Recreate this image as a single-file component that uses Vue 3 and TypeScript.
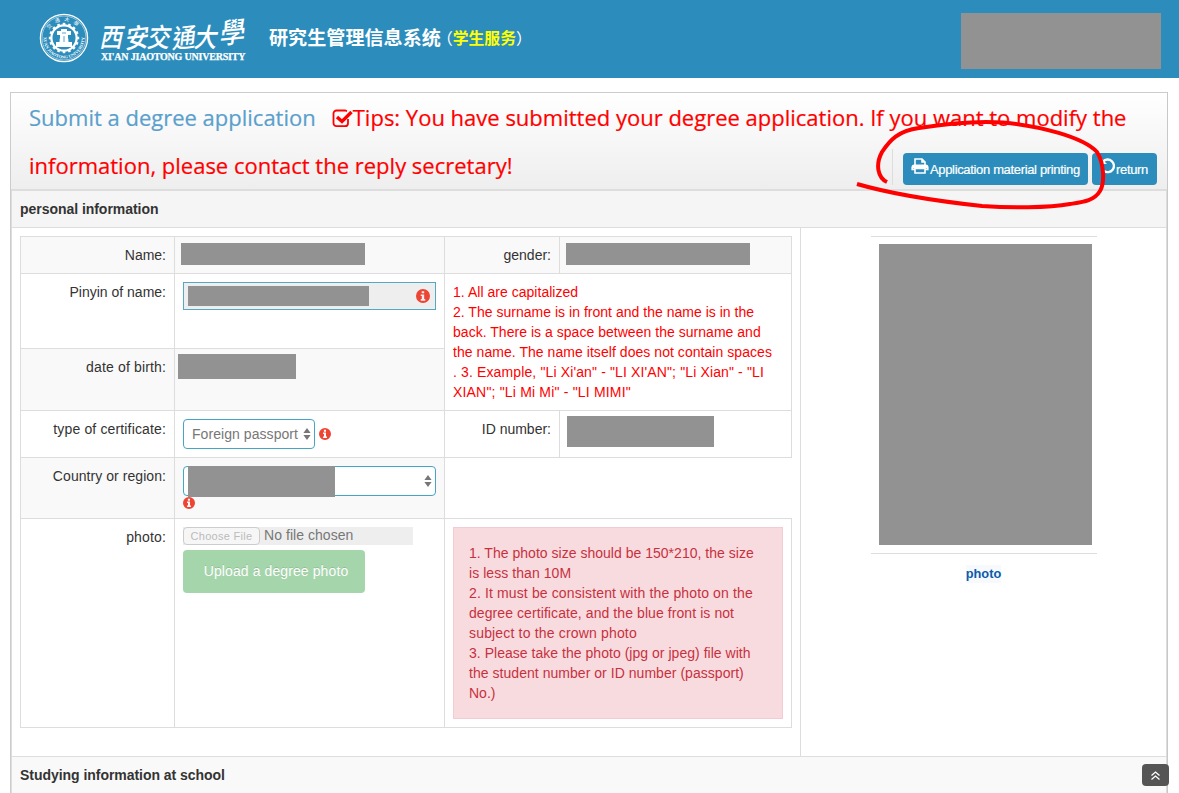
<script setup lang="ts">
interface Line { text: string; gap: number }
const nameHints: Line[] = [
  { text: '1. All are capitalized', gap: 0.03 },
  { text: '2. The surname is in front and the name is in the', gap: 0.02 },
  { text: 'back. There is a space between the surname and', gap: 0.03 },
  { text: 'the name. The name itself does not contain spaces', gap: 0.05 },
  { text: '. 3. Example, "Li Xi\'an" - "LI XI\'AN"; "Li Xian" - "LI', gap: 0.13 },
  { text: 'XIAN"; "Li Mi Mi" - "LI MIMI"', gap: 0.18 },
]
const photoHints: Line[] = [
  { text: '1. The photo size should be 150*210, the size', gap: 0.02 },
  { text: 'is less than 10M', gap: 0.06 },
  { text: '2. It must be consistent with the photo on the', gap: 0.13 },
  { text: 'degree certificate, and the blue front is not', gap: 0.08 },
  { text: 'subject to the crown photo', gap: 0.17 },
  { text: '3. Please take the photo (jpg or jpeg) file with', gap: 0.03 },
  { text: 'the student number or ID number (passport)', gap: 0.04 },
  { text: 'No.)', gap: 0 },
]
const teeth: number[] = Array.from({ length: 16 }, (_, i) => i * 22.5)
const infoPath = 'M6.5 0a6.5 6.5 0 1 0 0 13a6.5 6.5 0 0 0 0-13zM5.3 2h2.3v2H5.3zM4.4 5h3.2v4.3h1v1.6H4.4V9.3h1V6.5h-1z'
</script>

<template>
  <div class="page">
    <header class="topbar">
      <svg class="seal" width="50" height="50" viewBox="0 0 50 50">
        <defs>
          <path id="seal-arc" d="M4.5 25a20.500 20.500 0 0 0 41 0" />
          <path id="seal-top" d="M8 25a17 17 0 0 1 34 0" />
        </defs>
        <circle cx="25" cy="25" r="23.6" fill="none" stroke="#fff" stroke-width="1.3" />
        <circle cx="25" cy="25" r="22" fill="none" stroke="#fff" stroke-width=".5" />
        <text class="seal-en" fill="#fff"><textPath href="#seal-arc" startOffset="50%" text-anchor="middle">XI'AN JIAOTONG UNIVERSITY</textPath></text>
        <text class="seal-cn" fill="#fff"><textPath href="#seal-top" startOffset="50%" text-anchor="middle">交通大學</textPath></text>
        <circle cx="25" cy="25" r="12.600" fill="none" stroke="#fff" stroke-width="2.200" />
        <rect v-for="a in teeth" :key="a" x="23.700" y="9.800" width="2.600" height="3.200" fill="#fff" :transform="`rotate(${a} 25 25)`" />
        <path d="M18 18h4v-2h6v2h4v4h-3v3l1 4h3v5H17v-5h3l1-4v-3h-3z" fill="#fff" />
        <path d="M16 28h5M29 28h5M23 20h4M25 23v6" stroke="#2c8dbc" stroke-width=".8" />
      </svg>
      <div class="wordmark">
        <div class="wordmark-cn"><span>西</span><span>安</span><span>交</span><span>通</span><span>大</span><span>學</span></div>
        <div class="wordmark-en">XI'AN JIAOTONG UNIVERSITY</div>
      </div>
      <div class="system"><b>研究生管理信息系统</b><span class="sub"><i>（</i><em>学生服务</em><i>）</i></span></div>
      <div class="block user"></div>
    </header>

    <main class="box">
      <div class="box-head">
        <h1><span class="title">Submit a degree application</span><svg class="check" width="21" height="20" viewBox="0 0 21 20"><path d="M16 11v4.200a3 3 0 0 1-3 3H4.500a3 3 0 0 1-3-3V5.500a3 3 0 0 1 3-3H13l2 .6" fill="none" stroke="red" stroke-width="1.800" /><path d="M5 9l5 4.500L19.500 4" fill="none" stroke="red" stroke-width="3.400" /></svg><span>Tips: You have submitted your degree application. If you want to modify the</span><br><span>information, please contact the reply secretary!</span></h1>
        <div class="actions">
          <button class="print"><svg width="18" height="16" viewBox="0 0 18 16"><path d="M4 7V1h7l3 3v3M11 1v3h3M3.500 11.500H1.200V9A2 2 0 0 1 3 7.200h12A2 2 0 0 1 16.800 9v2.500h-2.300M4 10.500h10V15H4z" fill="none" stroke="#fff" stroke-width="1.600" /><path d="M1.500 7.500h15v3h-15z" fill="#fff" /></svg><span>Application material printing</span></button>
          <button class="return"><svg width="15" height="16" viewBox="0 0 15 16"><path d="M3 3.600A6.300 6.300 0 1 1 4 13" fill="none" stroke="#fff" stroke-width="2.400" /><path d="M1 0v6h6z" fill="#fff" /></svg><span>return</span></button>
        </div>
      </div>
      <div class="box-body">
        <div class="section first"><b>personal information</b></div>
        <div class="columns">
          <div class="left">
            <div class="grid">
              <div class="cell label gray"><span>Name:</span></div>
              <div class="cell gray"><div class="block name"></div></div>
              <div class="cell label gray"><span>gender:</span></div>
              <div class="cell gray"><div class="block name"></div></div>

              <div class="cell label"><span>Pinyin of name:</span></div>
              <div class="cell"><div class="input"><div class="block pinyin"></div><svg width="14" height="14" viewBox="0 0 13 13"><path :d="infoPath" fill="#ee4433" fill-rule="evenodd" /></svg></div></div>
              <div class="cell hints"><div v-for="(h, i) in nameHints" :key="i" :style="{ letterSpacing: h.gap + 'px' }">{{ h.text }}</div></div>

              <div class="cell label gray airy"><span>date of birth:</span></div>
              <div class="cell gray"><div class="block birth"></div></div>

              <div class="cell label airy"><span>type of certificate:</span></div>
              <div class="cell cert"><div class="select"><span>Foreign passport</span><svg width="8" height="12" viewBox="0 0 8 12"><path d="M4 0l3.600 5H.4zM4 12l3.600-5H.4z" fill="#777" /></svg></div><svg width="12" height="12" viewBox="0 0 13 13"><path :d="infoPath" fill="#ee4433" fill-rule="evenodd" /></svg></div>
              <div class="cell label"><span>ID number:</span></div>
              <div class="cell"><div class="block idno"></div></div>

              <div class="cell label gray country-label"><span>Country or region:</span></div>
              <div class="cell gray"><div class="select wide"><div class="block country"></div><svg width="8" height="12" viewBox="0 0 8 12"><path d="M4 0l3.600 5H.4zM4 12l3.600-5H.4z" fill="#777" /></svg></div><svg class="below" width="12" height="12" viewBox="0 0 13 13"><path :d="infoPath" fill="#ee4433" fill-rule="evenodd" /></svg></div>
              <div class="empty"></div>

              <div class="cell label airy"><span>photo:</span></div>
              <div class="cell upload"><div class="file"><span class="choose">Choose File</span><span class="nofile">No file chosen</span></div><button class="green"><span>Upload a degree photo</span></button></div>
              <div class="cell alertcell"><div class="alert"><div v-for="(h, i) in photoHints" :key="i" :style="{ letterSpacing: h.gap + 'px' }">{{ h.text }}</div></div></div>
            </div>
          </div>
          <div class="right">
            <div class="frame"><div class="block portrait"></div></div>
            <b class="caption">photo</b>
          </div>
        </div>
        <div class="section second"><b>Studying information at school</b></div>
      </div>
    </main>

    <svg class="ink" width="260" height="100" viewBox="850 115 260 100"><path d="M887 182C878 178 875 165 882 152C890 140 898 131 919 128C950 123 980 121 1003 122.500C1040 126 1083 137 1097 152C1104 163 1105 183 1100 191C1094 201 1083 202 1070 204C1048 208 1010 208 982 206C945 202 895 195 857 184" fill="none" stroke="red" stroke-width="4" /></svg>
    <div class="totop"><svg width="11" height="11" viewBox="0 0 11 11"><path d="M1.500 5.500l4-3.500 4 3.500M1.500 9.500l4-3.500 4 3.500" fill="none" stroke="#fff" stroke-width="1.300" /></svg></div>
  </div>
</template>

<style>
html, body { overflow: hidden; }
</style>
<style scoped>
* { box-sizing: border-box; }
svg { flex: none; }
.page { position: relative; width: 1179px; height: 793px; overflow: hidden; background: #fff; color: #333; font: 14px/20px "Liberation Sans", Arial, sans-serif; }
.block { background: #929292; flex: none; }
.topbar { display: flex; height: 78px; background: #2c8dbc; color: #fff; padding: 13px 18px 0 39px; }
.seal-en { font: bold 4.4px "Liberation Serif", serif; }
.seal-cn { font: 5px "Noto Sans CJK SC", sans-serif; letter-spacing: 4px; }
.wordmark { width: 146px; margin-left: 11px; }
.wordmark-cn { height: 37px; display: flex; justify-content: space-between; transform: skewX(-12deg); font: 500 23px/50px "Noto Sans CJK TC", sans-serif; margin: -3px 0 0 3px; }
.wordmark-cn span:nth-child(2n) { transform: rotate(-6deg) scaleY(1.15); }
.wordmark-cn span:nth-child(2n + 1) { transform: scaleY(1.15); }
.wordmark-cn span:last-child { font-size: 25px; line-height: 41px; }
.wordmark-en { font: bold 10px/12px "Liberation Serif", serif; letter-spacing: -.2px; white-space: nowrap; margin: 4px 0 0 1px; -webkit-text-stroke: .25px #fff; }
.system { margin-left: 23px; font-family: "Noto Sans CJK SC", sans-serif; white-space: nowrap; display: flex; height: 48px; line-height: 48px; width: 300px; }
.system b { font-size: 19.100px; font-weight: 700; }
.sub { font-size: 15.800px; line-height: 50px; margin-left: 4px; }
.sub i { font-style: normal; font-feature-settings: "halt"; }
.sub em { font-style: normal; font-weight: 700; color: #ff0; }
.user { width: 200px; height: 56px; margin-left: auto; }
.box { margin: 14px 11px 0 10px; width: 1158px; height: 720px; border: 1px solid #ccc; border-right-color: #c8c8c8; }
.box-head { height: 98px; border-bottom: 2px solid #ddd; background: linear-gradient(#fff, #eee); position: relative; }
h1 { margin: 0; padding: 0 0 0 18px; font: 22px/48px "Open Sans", sans-serif; color: red; white-space: nowrap; -webkit-text-stroke: .2px currentColor; }
.title { color: #5aa0cc; }
.check { margin: 0 0 0 16px; vertical-align: -2px; }
.actions { position: absolute; right: 10px; top: 56px; height: 36px; padding: 4px 0 0 10px; border-left: 1px solid #ddd; display: flex; gap: 4px; }
.actions button { border: 0; border-radius: 4px; background: #2c8dbc; color: #fff; height: 32px; font: 13px/20px "Liberation Sans", sans-serif; display: flex; white-space: nowrap; padding: 5px 8px 0; }
.actions span { line-height: 24px; margin-left: 1px; letter-spacing: -.34px; -webkit-text-stroke: .2px #fff; }
.print { width: 185px; }
.return { width: 65px; }
.box-body { border: 1px solid #ddd; border-top: 0; height: 620px; }
.section { height: 37px; background: #f5f5f5; line-height: 36px; padding-left: 8px; border-bottom: 1px solid #ddd; letter-spacing: -.04px; }
.second { border: 0; border-top: 1px solid #ddd; background: #f9f9f9; height: 38px; line-height: 37px; }
.columns { display: flex; height: 528px; }
.left { width: 789px; border-right: 1px solid #ddd; padding: 8px; }
.grid { display: grid; grid-template-columns: 154px 270px 115px 232px; grid-template-rows: 37px 75px 62px 47px 61px 209px; }
.cell { border: 1px solid #ddd; margin: 0 -1px -1px 0; padding: 8px; min-width: 0; }
.gray { background: #f9f9f9; }
.label { text-align: right; white-space: nowrap; }
.airy { letter-spacing: .15px; }
.country-label { letter-spacing: .06px; }
.name { width: 184px; height: 22px; margin: -2px 0 0 -2px; }
.input { height: 28px; border: 1px solid #55a8c0; background: #eee; padding: 3px 5px 0 4px; display: flex; justify-content: space-between; }
.pinyin { width: 181px; height: 20px; }
.input svg { margin-top: 3px; }
.hints { grid-column: 3 / 5; grid-row: 2 / 4; color: red; white-space: nowrap; }
.birth { width: 118px; height: 25px; margin: -3px 0 0 -5px; }
.cert { display: flex; }
.select { width: 132px; height: 30px; border: 1px solid #45a5c4; border-radius: 4px; background: #fff; padding: 0 3px 0 8px; line-height: 28px; color: #777; display: flex; justify-content: space-between; white-space: nowrap; letter-spacing: .06px; }
.select svg { margin-top: 8px; }
.cert > svg { margin: 9px 0 0 4px; }
.idno { width: 147px; height: 31px; margin: -3px 0 0 -1px; }
.wide { width: 253px; padding: 0 3px 0 4px; }
.country { width: 147px; height: 31px; margin-top: -1px; }
.below { display: block; margin-top: 1px; }
.empty { grid-column: 3 / 5; }
.file { width: 230px; height: 18px; background: #eee; display: flex; line-height: 17px; color: #777; }
.choose { width: 77px; border: 1px solid #ccc; border-radius: 4px; background: #f6f6f6; color: #bbb; font-size: 11px; line-height: 17px; text-align: center; letter-spacing: .3px; white-space: nowrap; }
.nofile { margin-left: 4px; letter-spacing: .05px; }
.green { width: 182px; height: 43px; margin: 5px 0 0; padding: 0 0 0 4px; border: 0; border-radius: 4px; background: #a5d6ab; color: #fff; font: 14px/43px "Liberation Sans", sans-serif; letter-spacing: .1px; white-space: nowrap; text-shadow: 0 -1px 0 rgba(0, 0, 0, .12); display: flex; justify-content: center; }
.alertcell { grid-column: 3 / 5; }
.alert { height: 192px; background: #f7dbde; border: 1px solid #f2ccd3; color: #c9303e; padding: 15px; white-space: nowrap; }
.right { flex: 1; display: flex; flex-direction: column; align-items: center; padding-top: 8px; }
.frame { width: 226px; height: 318px; border: solid #ddd; border-width: 1px 0; padding: 7px 0 0 8px; }
.portrait { width: 213px; height: 301px; }
.caption { color: #0a5cab; font-size: 12.800px; margin-top: 11px; background: #f8f9fd; line-height: 18px; }
.ink { position: absolute; left: 850px; top: 115px; }
.totop { position: absolute; left: 1142px; top: 764px; width: 27px; height: 22px; border-radius: 4px; background: #555; display: flex; align-items: center; justify-content: center; }
</style>
